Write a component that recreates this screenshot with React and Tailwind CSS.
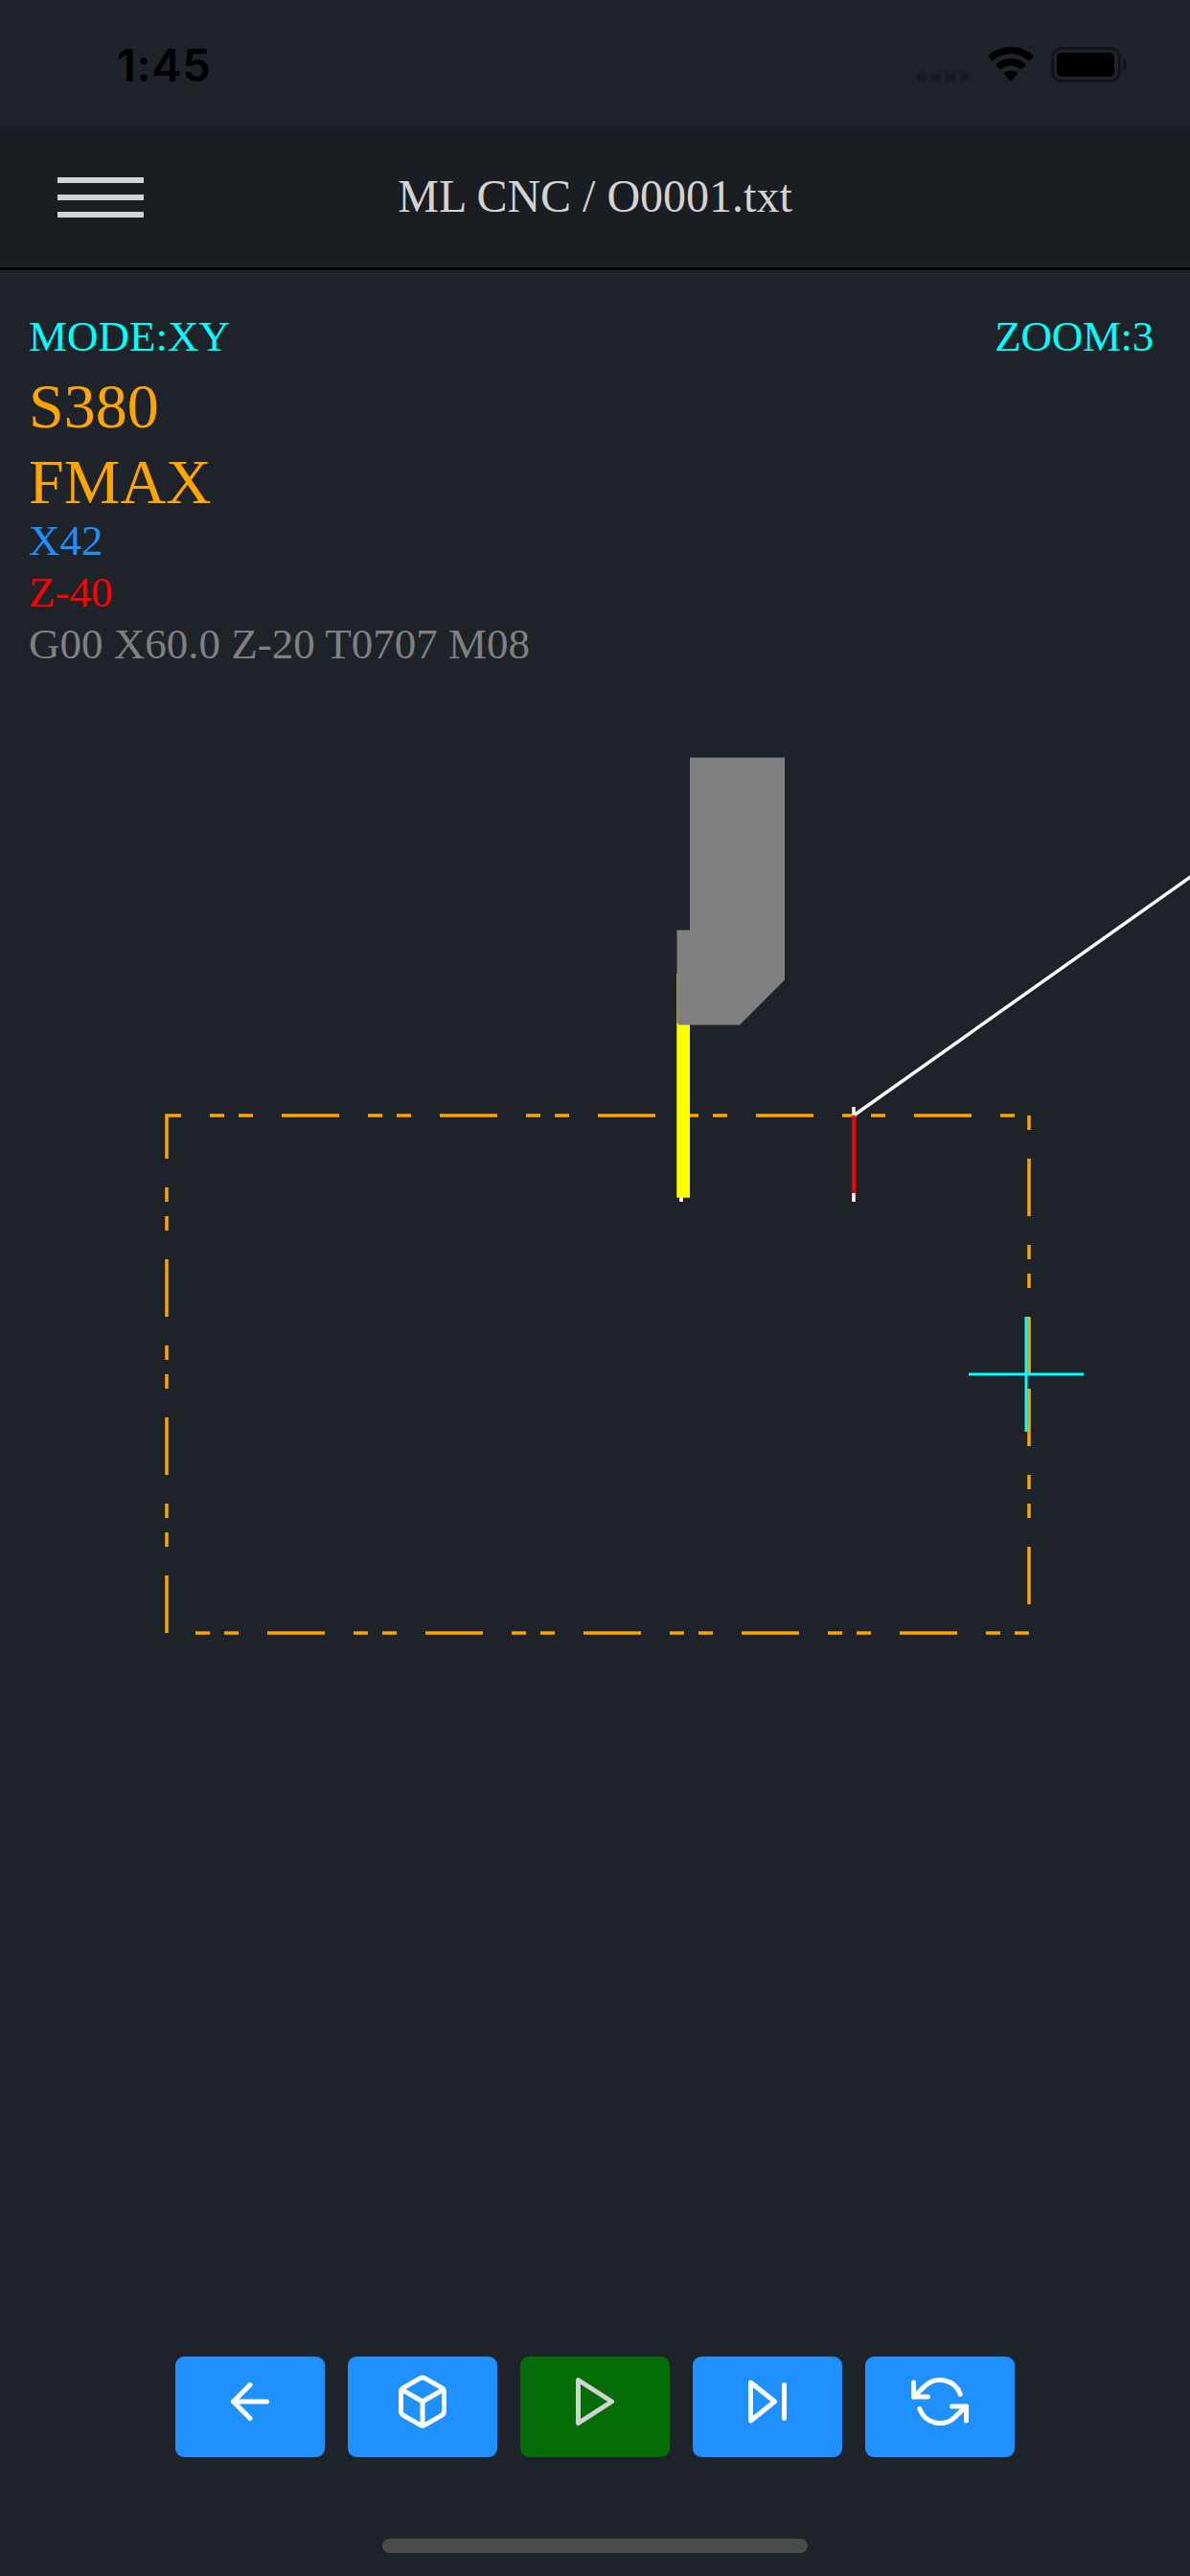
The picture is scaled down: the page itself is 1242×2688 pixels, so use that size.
import { FiArrowLeft, FiBox, FiPlay, FiSkipForward, FiRefreshCcw } from "react-icons/fi";

function StatusBar() {
  return (
    <div className="flex h-[132px] items-start justify-between pl-[122px] pr-[65px] text-black">
      <div className="mt-[39px] font-['Inter'] text-[47px] leading-[58px] font-semibold tracking-[0.7px]">1:45</div>
      <div className="mt-[49px] flex h-[37px]">
        <div className="mt-[26px] mr-[19px] flex gap-[5px]">
          {[0, 1, 2, 3].map((i) => (
            <span key={i} className="size-[10px] rounded-[3px] bg-[#1a1b1f]" />
          ))}
        </div>
        <svg className="mr-[18px] h-[36px] w-[48px]" viewBox="0 0 48 36">
          <path d="M0.6 10.2 Q0 9.5 0.7 8.8 C13 -2.9 35 -2.9 47.3 8.8 Q48 9.5 47.4 10.2 L43.8 14.2 Q43.1 14.9 42.4 14.2 C32 5 16 5 5.6 14.2 Q4.9 14.9 4.2 14.2 Z" />
          <path d="M8.7 19.2 Q8 18.5 8.7 17.8 C17 10.2 31 10.2 39.3 17.8 Q40 18.5 39.3 19.2 L35.6 23.3 Q34.9 24 34.2 23.4 C28 18.2 20 18.2 13.8 23.4 Q13.1 24 12.4 23.3 Z" />
          <path d="M17.3 28.4 Q16.7 27.6 17.5 27 C21 24 27 24 30.5 27 Q31.3 27.6 30.7 28.4 L24.8 35.1 Q24 35.9 23.2 35.1 Z" />
        </svg>
        <svg className="h-[37px] w-[80px]" viewBox="0 0 80 37">
          <rect x="1.5" y="1.5" width="70" height="34" rx="9.5" fill="none" stroke="#131417" strokeWidth="3" />
          <rect x="6" y="6" width="60" height="25" rx="5" />
          <path d="M75 12 Q79 14 79 18.5 Q79 23 75 25 Z" fill="#131417" />
        </svg>
      </div>
    </div>
  );
}

function Header() {
  return (
    <header className="grid h-[150px] grid-cols-[1fr_auto_1fr] items-start border-b-[3px] border-black bg-[#1a1d21] text-[#d3d3d3]">
      <button className="mt-[53px] ml-[60px] flex w-[90px] flex-col gap-[12px]">
        <span className="h-[6px] w-full bg-[#d3d3d3]" />
        <span className="h-[6px] w-full bg-[#d3d3d3]" />
        <span className="h-[6px] w-full bg-[#d3d3d3]" />
      </button>
      <h1 className="mt-[45px] text-[48px] leading-[56px]">ML CNC / O0001.txt</h1>
    </header>
  );
}

function Readout() {
  return (
    <section className="flex h-[416px] justify-between px-[30px] pt-[42px] text-[45px] leading-[54px]">
      <div>
        <div className="text-[#00ffff]">MODE:XY</div>
        <div className="mt-[6px] -mb-[5px] text-[66px] leading-[79px] text-[#ffa500]">
          <div>S380</div>
          <div>FMAX</div>
        </div>
        <div className="text-[#1e90ff]">X42</div>
        <div className="text-[#ff0000]">Z-40</div>
        <div className="text-[#808080]">G00 X60.0 Z-20 T0707 M08</div>
      </div>
      <div className="mr-[8px] tracking-[-0.3px] text-[#00ffff]">ZOOM:3</div>
    </section>
  );
}

function Simulation() {
  return (
    <svg className="h-[1760px] w-[1242px]" viewBox="0 698 1242 1760" fill="none" strokeWidth="3.5">
      <path
        d="M1074 1434V1704H174V1164H1074V1434"
        stroke="#ffa500"
        strokeDasharray="60 30 15 15 15 30"
        strokeDashoffset="150"
      />
      <path d="M891 1155V1164M1243 914.7L891 1164" stroke="#ffffff" />
      <path d="M891 1164V1254M711 1245V1254" stroke="#ff0000" strokeWidth="3.8" />
      <path d="M891 1245V1254M711 1245V1254" stroke="#ffffff" />
      <path d="M706.3 1015.5H720V1249.7H706.3Z" fill="#ffff00" />
      <path
        d="M720 790.5H819V1022.5L772 1069.5H710.5Q706.5 1069.5 706.5 1065.5V970.5H720Z"
        fill="#808080"
      />
      <path d="M1011 1434H1131M1071 1374V1494" stroke="#00ffff" strokeWidth="3" />
    </svg>
  );
}

const actions = [
  { name: "Back", Icon: FiArrowLeft },
  { name: "3D view", Icon: FiBox },
  { name: "Play", Icon: FiPlay, active: true },
  { name: "Next step", Icon: FiSkipForward },
  { name: "Restart", Icon: FiRefreshCcw },
];

function Controls() {
  return (
    <nav className="flex justify-center gap-[24px] pt-[0.5px]">
      {actions.map(({ name, Icon, active }) => (
        <button
          key={name}
          aria-label={name}
          className={
            active
              ? "flex h-[105px] w-[156px] justify-center rounded-[9px] bg-[#008000] pt-[17px] text-white opacity-80"
              : "flex h-[105px] w-[156px] justify-center rounded-[9px] bg-[#1e90ff] pt-[17px] text-white"
          }
        >
          <Icon className="size-[60px]" />
        </button>
      ))}
    </nav>
  );
}

export default function App() {
  return (
    <div className="flex h-[2688px] w-[1242px] flex-col overflow-hidden bg-[#1e2229] font-['Liberation_Serif',serif]">
      <StatusBar />
      <Header />
      <Readout />
      <Simulation />
      <Controls />
      <div className="mx-auto mt-auto mb-[24px] h-[15px] w-[444px] rounded-full bg-[#4b4b4b]" />
    </div>
  );
}
